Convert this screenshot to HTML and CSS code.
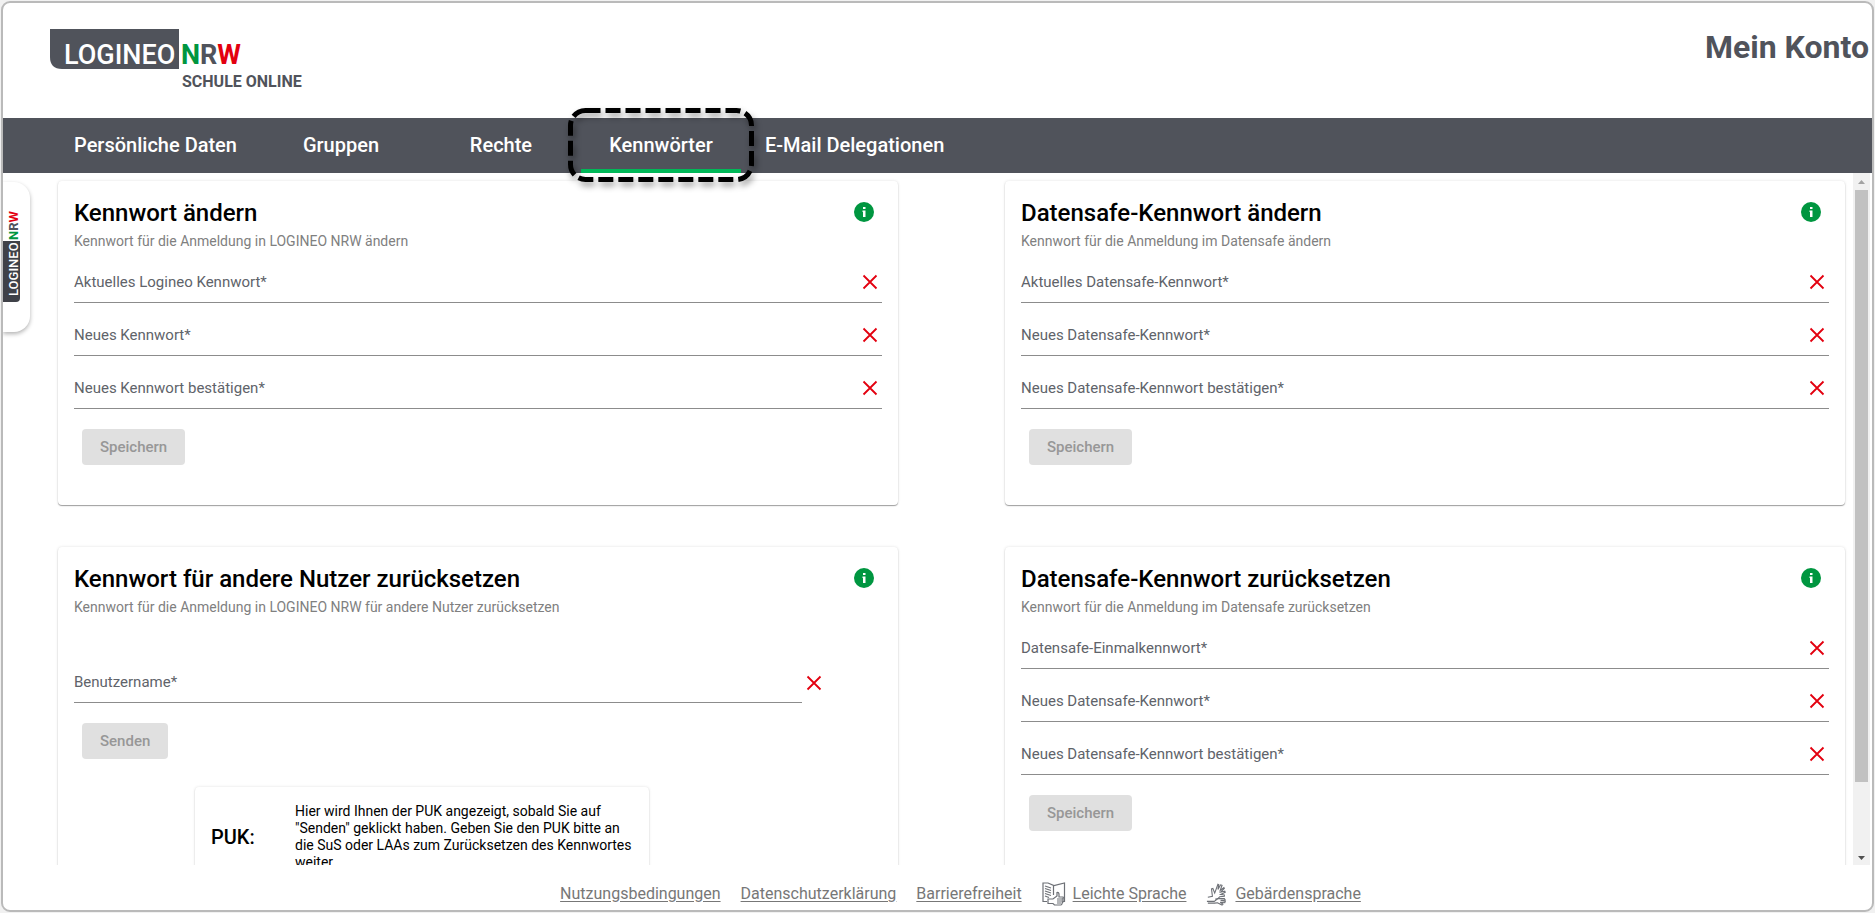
FILE: index.html
```html
<!DOCTYPE html>
<html lang="de">
<head>
<meta charset="utf-8">
<title>Mein Konto</title>
<link rel="stylesheet" href="styles.css">
</head>
<body>
<svg class="sprite" aria-hidden="true">
  <symbol id="cross" viewBox="0 0 16 16"><path d="M1.500 1.500 14.500 14.500M14.500 1.500 1.500 14.500" stroke="#e3000f" stroke-width="1.800" fill="none"/></symbol>
  <symbol id="info" viewBox="0 0 20 20"><circle cx="10" cy="10" r="10" fill="#009640"/><path d="M9 5h2.500v2H9zM8.500 8.500h3V15H9V10h-.5z" fill="#fff"/></symbol>
</svg>
<div class="app">
  <header class="header">
    <svg class="logo" width="260" height="62" viewBox="0 0 260 62" role="img" aria-label="LOGINEO NRW Schule Online">
      <path d="M0 0H129V40H12Q0 40 0 28Z" fill="#50535b"/>
      <g class="logo-word">
        <text x="14" y="35" fill="#fff">LOGINEO</text>
        <text class="bold" x="131" y="35"><tspan fill="#009640">N</tspan><tspan fill="#50535b">R</tspan><tspan fill="#e3000f">W</tspan></text>
      </g>
      <text class="logo-sub" x="132" y="58" fill="#50535b">SCHULE ONLINE</text>
    </svg>
    <h1 class="page-title">Mein Konto</h1>
  </header>
  <nav class="tabs">
    <a class="tab" href="#daten">Persönliche Daten</a>
    <a class="tab" href="#gruppen">Gruppen</a>
    <a class="tab" href="#rechte">Rechte</a>
    <a class="tab active" href="#kennwoerter" aria-current="page">Kennwörter
      <svg class="marker" width="188" height="76" viewBox="0 0 188 76" aria-hidden="true"><rect x="3.500" y="3.500" width="181" height="69" rx="15" fill="none" stroke="#000" stroke-width="5" stroke-dasharray="15 5"/></svg>
    </a>
    <a class="tab" href="#delegationen">E-Mail Delegationen</a>
  </nav>
  <div class="body">
    <aside class="side-tab">
      <svg width="18" height="92" viewBox="0 0 18 92" role="img" aria-label="LOGINEO NRW">
        <path d="M0 31H17V88Q17 92 13 92H0Z" fill="#3f4148"/>
        <g class="side-word" transform="translate(15 86) rotate(-90)">
          <text x="0" y="0" fill="#fff">LOGINEO</text>
          <text class="bold" x="56" y="0"><tspan fill="#009640">N</tspan><tspan fill="#50535b">R</tspan><tspan fill="#e3000f">W</tspan></text>
        </g>
      </svg>
    </aside>
    <main class="cards">
      <section class="card">
        <div class="card-head"><h2>Kennwort ändern</h2><svg class="info"><use href="#info"/></svg></div>
        <p class="sub">Kennwort für die Anmeldung in LOGINEO NRW ändern</p>
        <form>
          <div class="field"><label for="a1">Aktuelles Logineo Kennwort*</label><input id="a1" type="password"><svg class="cross"><use href="#cross"/></svg></div>
          <div class="field"><label for="a2">Neues Kennwort*</label><input id="a2" type="password"><svg class="cross"><use href="#cross"/></svg></div>
          <div class="field"><label for="a3">Neues Kennwort bestätigen*</label><input id="a3" type="password"><svg class="cross"><use href="#cross"/></svg></div>
          <button class="btn" type="submit" disabled>Speichern</button>
        </form>
      </section>
      <section class="card">
        <div class="card-head"><h2>Datensafe-Kennwort ändern</h2><svg class="info"><use href="#info"/></svg></div>
        <p class="sub">Kennwort für die Anmeldung im Datensafe ändern</p>
        <form>
          <div class="field"><label for="b1">Aktuelles Datensafe-Kennwort*</label><input id="b1" type="password"><svg class="cross"><use href="#cross"/></svg></div>
          <div class="field"><label for="b2">Neues Datensafe-Kennwort*</label><input id="b2" type="password"><svg class="cross"><use href="#cross"/></svg></div>
          <div class="field"><label for="b3">Neues Datensafe-Kennwort bestätigen*</label><input id="b3" type="password"><svg class="cross"><use href="#cross"/></svg></div>
          <button class="btn" type="submit" disabled>Speichern</button>
        </form>
      </section>
      <section class="card">
        <div class="card-head"><h2>Kennwort für andere Nutzer zurücksetzen</h2><svg class="info"><use href="#info"/></svg></div>
        <p class="sub">Kennwort für die Anmeldung in LOGINEO NRW für andere Nutzer zurücksetzen</p>
        <form class="reset">
          <div class="user-row">
            <div class="field"><label for="c1">Benutzername*</label><input id="c1" type="text"></div>
            <svg class="cross"><use href="#cross"/></svg>
          </div>
          <button class="btn" type="submit" disabled>Senden</button>
        </form>
        <div class="puk">
          <strong>PUK:</strong>
          <p>Hier wird Ihnen der PUK angezeigt, sobald Sie auf "Senden" geklickt haben. Geben Sie den PUK bitte an die SuS oder LAAs zum Zurücksetzen des Kennwortes weiter.</p>
        </div>
      </section>
      <section class="card">
        <div class="card-head"><h2>Datensafe-Kennwort zurücksetzen</h2><svg class="info"><use href="#info"/></svg></div>
        <p class="sub">Kennwort für die Anmeldung im Datensafe zurücksetzen</p>
        <form>
          <div class="field"><label for="d1">Datensafe-Einmalkennwort*</label><input id="d1" type="password"><svg class="cross"><use href="#cross"/></svg></div>
          <div class="field"><label for="d2">Neues Datensafe-Kennwort*</label><input id="d2" type="password"><svg class="cross"><use href="#cross"/></svg></div>
          <div class="field"><label for="d3">Neues Datensafe-Kennwort bestätigen*</label><input id="d3" type="password"><svg class="cross"><use href="#cross"/></svg></div>
          <button class="btn" type="submit" disabled>Speichern</button>
        </form>
      </section>
    </main>
    <div class="scrollbar" aria-hidden="true">
      <svg viewBox="0 0 17 17"><path d="M5 11h7L8.500 7z" fill="#a3a3a3"/></svg>
      <div class="track"><div class="thumb"></div></div>
      <svg viewBox="0 0 17 17"><path d="M5 8h7L8.500 12z" fill="#505050"/></svg>
    </div>
  </div>
  <footer class="footer">
    <a href="#nutzung">Nutzungsbedingungen</a>
    <a href="#datenschutz">Datenschutzerklärung</a>
    <a href="#barrierefreiheit">Barrierefreiheit</a>
    <span class="with-icon">
      <svg width="24" height="24" viewBox="0 0 24 24" fill="none" stroke="#6d7076" stroke-width="1.200"><path d="M5 19.500H1V1l5 0 6 2.500L22.500 1V19.500H21M11.500 3.500V13M3 4l6 2M3 6.500l6 2M3 9l6 2M3 11.500l6 2M3 14l4 1.500"/><path fill="#fff" d="M6 17h5l4-3V10.500q2-.5 2 2V15h4q1 1-.5 2 1.500 1 0 2 1 1-.5 2 .5 1-.5 1.500 0 .5-1 .5h-6L11 21.500H6z"/><path d="M15 17h5M15 19h5M15 21h4"/></svg>
      <a href="#leicht">Leichte Sprache</a>
    </span>
    <span class="with-icon">
      <svg width="22" height="24" viewBox="0 0 24 24" fill="none" stroke="#6d7076" stroke-width="1.200"><path d="M2 15.500l5-1-1-8 1.500-.5 2 5L13 1.500l1 .5-1 5L16 2l1.500.5L15.500 8l4-3 .5 1-4 4 4.500-1 .5 1-5 2.500 4 .5v1.500l-5 .5q-2 3-5 2.500"/><path d="M1 20h8l4-3 7 0 1 1.500-5 .5 5 1-.5 1.500-5-.5 3 2-1 1-5-2.500-3 .5H2"/></svg>
      <a href="#gebaerden">Gebärdensprache</a>
    </span>
  </footer>
</div>
</body>
</html>
```
FILE: styles.css
```css
* { box-sizing: border-box; }
html, body { height: 100%; }
body {
  margin: 0;
  padding: 1px;
  background: #f1f1f1;
  color: #000;
  font-family: Roboto, "Liberation Sans", sans-serif;
  font-size: 14px;
}
h1, h2, p { margin: 0; font-weight: 500; }
.sprite { display: none; }
.bold { font-weight: 700; }

.app {
  display: flex;
  flex-direction: column;
  height: 100%;
  border: 2px solid #bababa;
  border-radius: 9px;
  background: #fff;
  overflow: hidden;
}
.header {
  display: flex;
  flex: none;
  justify-content: space-between;
  align-items: flex-start;
  height: 115px;
  padding: 26px 3px 0 47px;
}
.logo-word { font-size: 27px; font-weight: 500; }
.logo-sub { font-size: 16px; font-weight: 700; }
.page-title { color: #50535b; font-size: 32px; font-weight: 700; line-height: 36px; }

.tabs {
  display: flex;
  flex: none;
  height: 55px;
  padding-left: 47px;
  background: #50535b;
}
.tab {
  position: relative;
  min-width: 160px;
  padding: 0 24px;
  color: #fff;
  font-size: 20px;
  font-weight: 500;
  line-height: 54px;
  text-align: center;
  text-decoration: none;
}
.tab.active { z-index: 2; border-bottom: 4px solid #00b858; }
.marker {
  position: absolute;
  top: -11px;
  left: -14px;
  filter: drop-shadow(2px 4px 3px rgba(0, 0, 0, .4));
  overflow: visible;
}

.body { position: relative; display: flex; flex: 1; min-height: 0; padding-right: 2px; }
.side-tab {
  position: absolute;
  top: 9px;
  left: 0;
  padding: 28px 9px 30px 0;
  border-radius: 0 16px 16px 0;
  background: #fff;
  box-shadow: 0 2px 4px rgba(0, 0, 0, .3);
}
.side-tab svg { display: block; }
.side-word { font-size: 13px; font-weight: 500; }

.cards {
  display: grid;
  flex: 1;
  grid-template-columns: 1fr 1fr;
  align-content: start;
  gap: 42px 107px;
  padding: 8px 8px 0 55px;
  overflow: hidden;
}
.card {
  padding: 16px 16px 40px;
  border-radius: 4px;
  background: #fff;
  box-shadow: 0 1px 1px rgba(0, 0, 0, .35), 0 0 3px rgba(0, 0, 0, .12);
}
.card-head { display: flex; justify-content: space-between; align-items: center; height: 32px; padding-right: 8px; }
h2 { font-size: 24px; line-height: 32px; }
.info { width: 20px; height: 20px; margin-bottom: 2px; }
.sub { padding-top: 2px; color: #808080; font-weight: 400; line-height: 20px; }
form { padding-top: 11px; }
.field {
  display: grid;
  grid-template-columns: 1fr 20px;
  align-items: center;
  height: 41px;
  margin-bottom: 12px;
  border-bottom: 1px solid #8c8c8c;
}
.field label { grid-area: 1 / 1; color: #60636a; font-size: 15px; line-height: 20px; }
.field input { grid-area: 1 / 1; width: 100%; height: 40px; padding: 0; border: 0; outline: 0; background: none; font: inherit; }
.cross { width: 16px; height: 16px; }
.btn {
  height: 36px;
  margin: 8px 8px 0;
  padding: 0 18px;
  border: 0;
  border-radius: 4px;
  background: #e0e0e0;
  color: #979797;
  font-family: inherit;
  font-size: 15px;
  font-weight: 500;
}
.reset { padding-top: 45px; }
.user-row { display: flex; align-items: center; gap: 4px; padding-right: 60px; }
.user-row .field { flex: 1; }
.user-row > .cross { margin-bottom: 12px; }
.puk {
  display: flex;
  align-items: center;
  width: 454px;
  margin: 28px 0 0 121px;
  padding: 16px;
  border-radius: 4px;
  box-shadow: 0 1px 1px rgba(0, 0, 0, .3), 0 0 3px rgba(0, 0, 0, .12);
}
.puk strong { flex: none; width: 84px; font-size: 20px; font-weight: 500; }
.puk p { font-weight: 400; line-height: 17px; }

.scrollbar { display: flex; flex: none; flex-direction: column; width: 17px; background: #f1f1f1; }
.scrollbar svg { flex: none; height: 17px; }
.track { flex: 1; padding: 0 2px; }
.thumb { height: 90%; background: #c1c1c1; }

.footer {
  display: flex;
  flex: none;
  justify-content: center;
  align-items: center;
  gap: 20px;
  height: 45px;
  padding: 12px 0 0 46px;
  font-size: 16px;
}
.footer a { color: #777; text-underline-offset: 2px; }
.with-icon { display: flex; align-items: center; gap: 7px; }
```
